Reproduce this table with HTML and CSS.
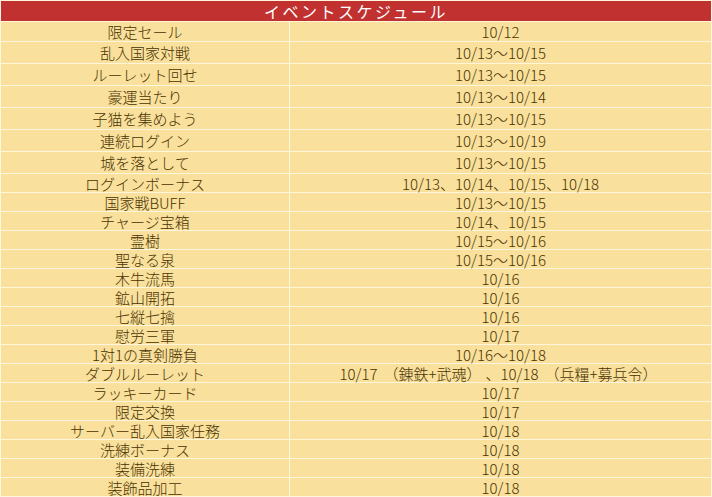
FILE: index.html
```html
<!DOCTYPE html>
<html lang="ja">
<head>
<meta charset="utf-8">
<title>イベントスケジュール</title>
<link rel="stylesheet" href="styles.css">
</head>
<body>
<div class="schedule">
  <div class="head">イベントスケジュール</div>

  <div class="cell r1">限定セール</div><div class="cell r1">10/12</div>
  <div class="cell tall">乱入国家対戦</div><div class="cell tall">10/13～10/15</div>
  <div class="cell tall">ルーレット回せ</div><div class="cell tall">10/13～10/15</div>
  <div class="cell tall">豪運当たり</div><div class="cell tall">10/13～10/14</div>
  <div class="cell tall">子猫を集めよう</div><div class="cell tall">10/13～10/15</div>
  <div class="cell tall">連続ログイン</div><div class="cell tall">10/13～10/19</div>
  <div class="cell tall">城を落として</div><div class="cell tall">10/13～10/15</div>
  <div class="cell">ログインボーナス</div><div class="cell">10/13、10/14、10/15、10/18</div>
  <div class="cell">国家戦BUFF</div><div class="cell">10/13～10/15</div>
  <div class="cell">チャージ宝箱</div><div class="cell">10/14、10/15</div>
  <div class="cell">霊樹</div><div class="cell">10/15～10/16</div>
  <div class="cell">聖なる泉</div><div class="cell">10/15～10/16</div>
  <div class="cell">木牛流馬</div><div class="cell">10/16</div>
  <div class="cell">鉱山開拓</div><div class="cell">10/16</div>
  <div class="cell">七縦七擒</div><div class="cell">10/16</div>
  <div class="cell">慰労三軍</div><div class="cell">10/17</div>
  <div class="cell">1対1の真剣勝負</div><div class="cell">10/16～10/18</div>
  <div class="cell">ダブルルーレット</div><div class="cell">10/17<span class="paren">（錬鉄+武魂）</span>、10/18<span class="paren">（兵糧+募兵令）</span></div>
  <div class="cell">ラッキーカード</div><div class="cell">10/17</div>
  <div class="cell">限定交換</div><div class="cell">10/17</div>
  <div class="cell">サーバー乱入国家任務</div><div class="cell">10/18</div>
  <div class="cell">洗練ボーナス</div><div class="cell">10/18</div>
  <div class="cell">装備洗練</div><div class="cell">10/18</div>
  <div class="cell">装飾品加工</div><div class="cell">10/18</div>
</div>
</body>
</html>
```
FILE: styles.css
```css
html, body {
  margin: 0;
  padding: 0;
  background: #fff6dc;
}

.schedule {
  width: 712px;
  box-sizing: border-box;
  padding: 1px 1px 0 1px;
  display: grid;
  grid-template-columns: 288px 1fr;
  gap: 1px;
  background: #fff6dc;
  font-family: "Noto Sans CJK JP", "Noto Sans", sans-serif;
  font-size: 15px;
  font-weight: 300;
  color: #4a3300;
}

.head {
  grid-column: 1 / 3;
  height: 20px;
  background: #c0312f;
  color: #ffffff;
  font-size: 16px;
  font-weight: 400;
  letter-spacing: 2.5px;
  display: flex;
  align-items: center;
  justify-content: center;
  line-height: 1;
}

.cell {
  height: 18px;
  background: #f9e09c;
  display: flex;
  align-items: center;
  justify-content: center;
  line-height: 1;
  white-space: pre;
}

.cell .paren {
  margin: 0 4px 0 6px;
}

.cell.r1 {
  height: 19px;
}

.cell.tall {
  height: 21px;
}
```
